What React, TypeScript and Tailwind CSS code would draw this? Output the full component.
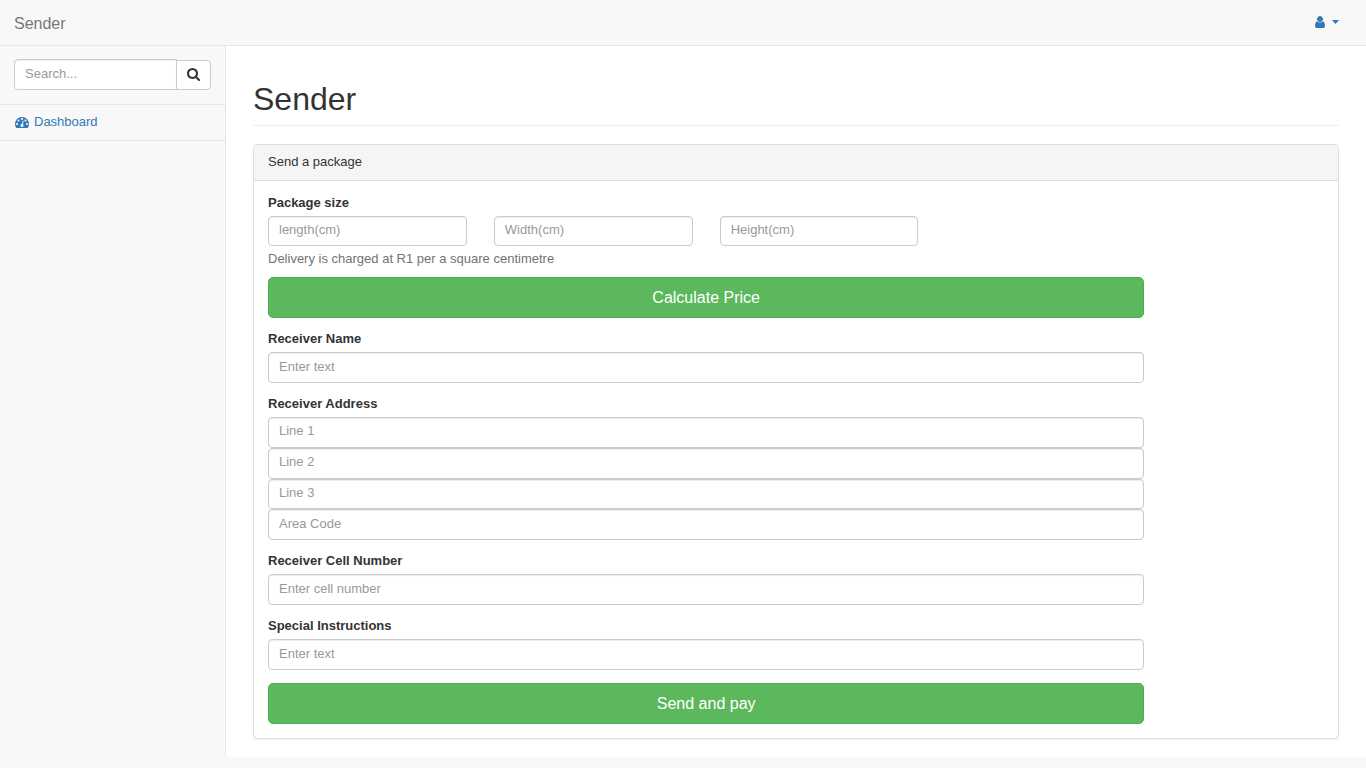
import React from 'react';

const fieldClass =
  'block w-full min-w-0 rounded-[4px] border border-[#ccc] bg-white px-[10px] text-[13px] leading-[18px] text-[#555] shadow-[inset_0_1px_1px_rgba(0,0,0,0.075)] outline-none placeholder:text-[#999] placeholder:opacity-100 focus:border-[#66afe9]';

const inputClass = `${fieldClass} pt-[4px] pb-[6px]`;

const labelClass = 'mb-[4px] block text-[13px] leading-[18px] font-bold';

const submitClass =
  'block h-[41px] w-full cursor-pointer rounded-[5px] border border-[#4cae4c] bg-[#5cb85c] text-[16px] leading-[21px] text-white hover:bg-[#449d44]';

function UserIcon() {
  return (
    <svg viewBox="0 0 1280 1792" className="h-[14px] w-[10px] fill-current" aria-hidden="true">
      <path d="M1280 1399q0 109-62.5 187t-150.5 78h-854q-88 0-150.5-78t-62.5-187q0-85 8.5-160.5t31.5-152 58.5-131 94-89 134.5-34.5q131 128 313 128t313-128q76 0 134.5 34.5t94 89 58.5 131 31.5 152 8.5 160.5zm-256-887q0 159-112.5 271.5t-271.5 112.5-271.5-112.5-112.5-271.5 112.5-271.5 271.5-112.5 271.5 112.5 112.5 271.5z" />
    </svg>
  );
}

function CaretIcon() {
  return (
    <svg viewBox="0 0 7 4" className="h-[4px] w-[7px] fill-current" aria-hidden="true">
      <path d="M0 0H7L3.5 4Z" />
    </svg>
  );
}

function SearchIcon() {
  return (
    <svg viewBox="0 0 1664 1792" className="h-[14px] w-[13px] fill-current" aria-hidden="true">
      <path d="M1152 832q0-185-131.5-316.5T704 384 387.5 515.5 256 832t131.5 316.5T704 1280t316.5-131.5T1152 832zm512 832q0 52-38 90t-90 38q-54 0-90-38l-343-342q-179 124-399 124-143 0-273.5-55.5t-225-150-150-225T0 832t55.5-273.5 150-225 225-150T704 128t273.5 55.5 225 150 150 225T1408 832q0 220-124 399l343 343q37 37 37 90z" />
    </svg>
  );
}

function DashboardIcon() {
  return (
    <svg viewBox="0 0 1792 1792" className="h-[14px] w-[14px] fill-current" aria-hidden="true">
      <path d="M384 1152q0-53-37.5-90.5T256 1024t-90.5 37.5T128 1152t37.5 90.5T256 1280t90.5-37.5T384 1152zm192-448q0-53-37.5-90.5T448 576t-90.5 37.5T320 704t37.5 90.5T448 832t90.5-37.5T576 704zm428 481l101-382q6-26-7.5-48.5T1059 725t-48 6.5-30 39.5l-101 382q-60 5-107 43.5t-63 98.5q-20 77 20 146t117 89 146-20 89-117q16-60-6-117t-72-91zm660-33q0-53-37.5-90.5T1536 1024t-90.5 37.5-37.5 90.5 37.5 90.5 90.5 37.5 90.5-37.5 37.5-90.5zm-640-640q0-53-37.5-90.5T896 384t-90.5 37.5T768 512t37.5 90.5T896 640t90.5-37.5T1024 512zm448 192q0-53-37.5-90.5T1344 576t-90.5 37.5T1216 704t37.5 90.5T1344 832t90.5-37.5T1472 704zm320 448q0 261-141 483-19 29-54 29H195q-35 0-54-29Q0 1414 0 1152q0-182 71-348t191-286 286-191 348-71 348 71 286 191 191 286 71 348z" />
    </svg>
  );
}

function Header() {
  return (
    <header className="flex items-center justify-between border-b border-[#e7e7e7] pr-[27px] pl-[14px]">
      <a href="#home" className="pt-[14px] pb-[12px] text-[16px] leading-[19px] text-[#777]">
        Sender
      </a>
      <button
        type="button"
        aria-label="Account menu"
        className="mb-[2px] flex cursor-pointer items-center gap-[7px] text-[#337ab7]"
      >
        <UserIcon />
        <CaretIcon />
      </button>
    </header>
  );
}

function Sidebar() {
  return (
    <aside className="w-[225px] shrink-0">
      <form
        className="flex items-end border-b border-[#e7e7e7] px-[14px] pt-[13px] pb-[14px]"
        onSubmit={(e) => e.preventDefault()}
      >
        <input
          type="text"
          aria-label="Search"
          placeholder="Search..."
          className={`${inputClass} h-[31px] flex-1 rounded-r-none`}
        />
        <button
          type="submit"
          aria-label="Search"
          className="-ml-px flex h-[30px] w-[35px] cursor-pointer items-center justify-center rounded-r-[4px] border border-[#ccc] bg-white pb-[2px] text-[#333]"
        >
          <SearchIcon />
        </button>
      </form>
      <nav>
        <a
          href="#dashboard"
          className="flex items-center gap-[5px] border-b border-[#e7e7e7] px-[15px] pt-[8px] pb-[9px] text-[13px] leading-[18px] text-[#337ab7]"
        >
          <DashboardIcon />
          Dashboard
        </a>
      </nav>
    </aside>
  );
}

function TextField({ id, label, placeholder }: { id: string; label: string; placeholder: string }) {
  return (
    <div>
      <label htmlFor={id} className={labelClass}>
        {label}
      </label>
      <input id={id} type="text" placeholder={placeholder} className={`${inputClass} h-[31px]`} />
    </div>
  );
}

const sizes = ['length(cm)', 'Width(cm)', 'Height(cm)'];
const addressLines = ['Line 1', 'Line 2', 'Line 3', 'Area Code'];

function PackageForm() {
  return (
    <form
      className="grid w-10/12 gap-[12px] pt-[13px] pr-[13px] pb-[14px] pl-[14px]"
      onSubmit={(e) => e.preventDefault()}
    >
      <div>
        <div role="group" aria-labelledby="size-label">
          <label id="size-label" htmlFor="size-0" className={labelClass}>
            Package size
          </label>
          <div className="grid grid-cols-4 gap-[27px]">
            {sizes.map((s, i) => (
              <input
                key={s}
                id={`size-${i}`}
                type="text"
                aria-label={s}
                placeholder={s}
                className={`${fieldClass} h-[30px] pt-[3px] pb-[7px]`}
              />
            ))}
          </div>
        </div>
        <p className="mt-[4px] mb-[9px] text-[13px] leading-[18px] text-[#737373]">
          Delivery is charged at R1 per a square centimetre
        </p>
        <button type="button" className={submitClass}>
          Calculate Price
        </button>
      </div>
      <TextField id="receiver-name" label="Receiver Name" placeholder="Enter text" />
      <div role="group" aria-labelledby="address-label">
        <label id="address-label" htmlFor="address-0" className={labelClass}>
          Receiver Address
        </label>
        <div className="grid h-[123px] grid-rows-4">
          {addressLines.map((line, i) => (
            <input
              key={line}
              id={`address-${i}`}
              type="text"
              aria-label={line}
              placeholder={line}
              className={inputClass}
            />
          ))}
        </div>
      </div>
      <TextField id="receiver-cell" label="Receiver Cell Number" placeholder="Enter cell number" />
      <TextField id="instructions" label="Special Instructions" placeholder="Enter text" />
      <button type="submit" className={`${submitClass} mt-px`}>
        Send and pay
      </button>
    </form>
  );
}

export default function App() {
  return (
    <div className="min-h-screen bg-[#f8f8f8] font-['Liberation_Sans',Arial,sans-serif] text-[13px] leading-[18px] text-[#333]">
      <Header />
      <div className="flex">
        <Sidebar />
        <main className="min-w-0 flex-1 border-l border-[#e7e7e7] bg-white px-[27px] pt-[35px] pb-[18px]">
          <h1 className="mb-[18px] border-b border-[#eee] pb-[8px] text-[32px] leading-[36px] font-medium">
            Sender
          </h1>
          <section className="rounded-[4px] border border-[#ddd] bg-white shadow-[0_1px_1px_rgba(0,0,0,0.05)]">
            <h2 className="rounded-t-[3px] border-b border-[#ddd] bg-[#f5f5f5] px-[14px] pt-[8px] pb-[9px] text-[13px] leading-[18px]">
              Send a package
            </h2>
            <PackageForm />
          </section>
        </main>
      </div>
    </div>
  );
}
